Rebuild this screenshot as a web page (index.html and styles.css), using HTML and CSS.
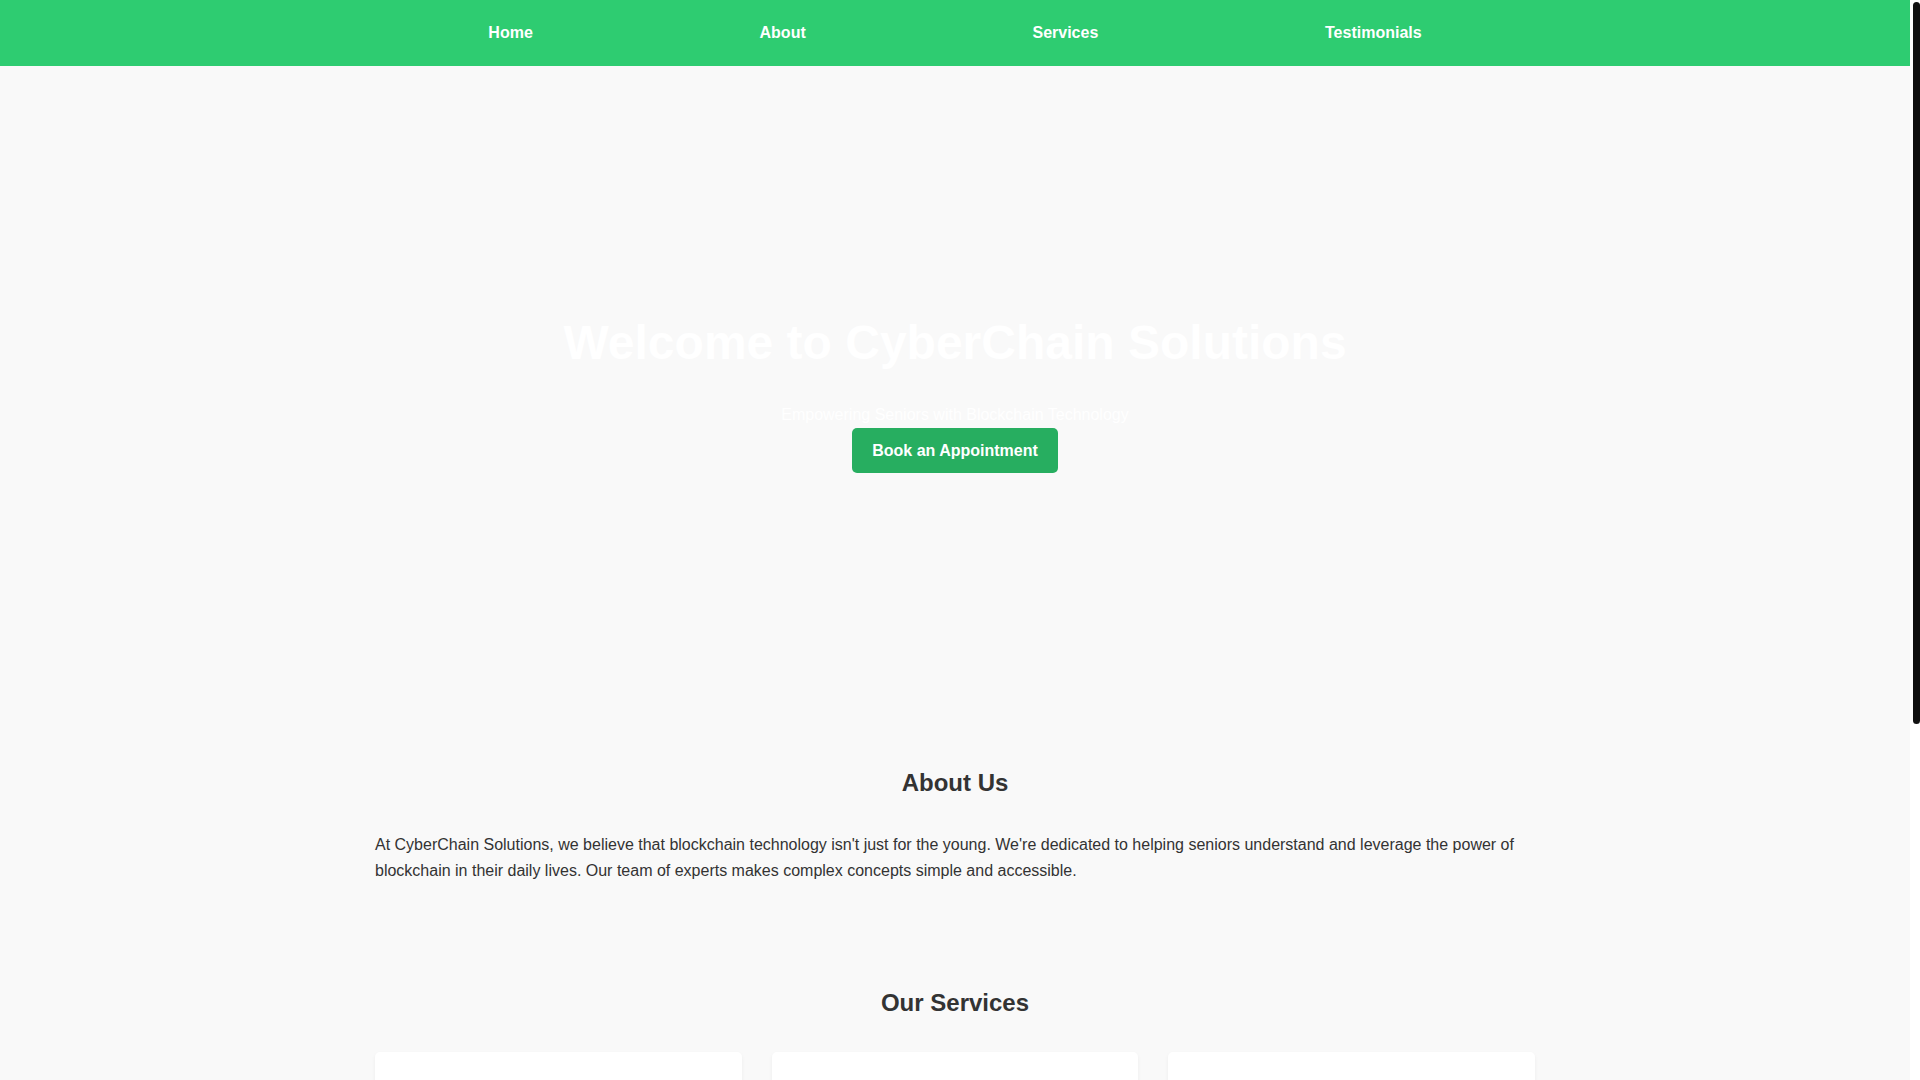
FILE: index.html
```html
<!DOCTYPE html>
<html lang="en">
<head>
<meta charset="UTF-8">
<title>CyberChain Solutions</title>
<link rel="stylesheet" href="styles.css">
</head>
<body>
<div class="page">
<nav class="nav">
  <ul class="nav-list">
    <li><a class="nav-link" href="#home">Home</a></li>
    <li><a class="nav-link" href="#about">About</a></li>
    <li><a class="nav-link" href="#services">Services</a></li>
    <li><a class="nav-link" href="#testimonials">Testimonials</a></li>
  </ul>
</nav>

<header class="hero" id="home">
  <div class="hero-content">
    <h1 class="hero-title">Welcome to CyberChain Solutions</h1>
    <p class="hero-sub">Empowering Seniors with Blockchain Technology</p>
    <a class="btn" href="#book">Book an Appointment</a>
  </div>
</header>

<section class="section" id="about">
  <h2 class="section-title">About Us</h2>
  <p class="text">At CyberChain Solutions, we believe that blockchain technology isn't just for the young. We're dedicated to helping seniors understand and leverage the power of blockchain in their daily lives. Our team of experts makes complex concepts simple and accessible.</p>
</section>

<section class="section" id="services">
  <h2 class="section-title">Our Services</h2>
  <div class="cards">
    <div class="card">
      <h3 class="card-title">Blockchain Basics</h3>
      <p class="text">Learn the fundamentals of blockchain technology in a friendly, easy-to-follow format.</p>
    </div>
    <div class="card">
      <h3 class="card-title">Digital Wallet Setup</h3>
      <p class="text">Get personal help setting up and securing your own digital wallet.</p>
    </div>
    <div class="card">
      <h3 class="card-title">Scam Protection</h3>
      <p class="text">Discover how to recognize and avoid common online and crypto scams.</p>
    </div>
  </div>
</section>

<section class="section" id="testimonials">
  <h2 class="section-title">Testimonials</h2>
  <div class="testimonial">
    <p class="text">"CyberChain Solutions made blockchain easy to understand. I feel confident managing my digital assets now!"</p>
    <p class="text author">- Margaret, 72</p>
  </div>
</section>

<footer class="footer">
  <p class="footer-text">&copy; 2024 CyberChain Solutions. All rights reserved.</p>
</footer>
</div>

<div class="scrollbar" aria-hidden="true">
  <div class="scrollbar-thumb"></div>
</div>
</body>
</html>
```

FILE: styles.css
```css
html {
  background: #f9f9f9;
}

body {
  margin: 0;
  padding-right: 10px;
  font-family: "Liberation Sans", Arial, sans-serif;
  font-size: 16px;
  line-height: 1.6;
  color: #333;
  background: #f9f9f9;
}

.scrollbar {
  position: fixed;
  top: 0;
  right: 0;
  width: 10px;
  height: 100vh;
  background: #ffffff;
}

.scrollbar-thumb {
  margin: 2px 0 0 3px;
  width: 7px;
  height: 722px;
  border-radius: 4px;
  background: #111111;
}

.nav {
  background: #2ecc71;
  padding: 20px 0;
}

.nav-list {
  list-style: none;
  margin: 0 auto;
  max-width: 1200px;
  box-sizing: border-box;
  padding: 0 20px;
  display: flex;
  justify-content: space-around;
  line-height: 26px;
}

.nav-link {
  color: #fff;
  text-decoration: none;
  font-weight: bold;
}

.hero {
  height: 60vh;
  box-sizing: border-box;
  padding-bottom: 1.5px;
  display: flex;
  align-items: center;
  justify-content: center;
  text-align: center;
  color: #fff;
}

.hero-title {
  font-size: 48px;
  margin: 0 0 20px;
}

.hero-sub {
  margin: 0;
}

.btn {
  display: inline-block;
  background: #27ae60;
  color: #fff;
  font-weight: bold;
  text-decoration: none;
  padding: 10px 20px;
  border-radius: 5px;
}

.section {
  max-width: 1200px;
  margin: 0 auto;
  box-sizing: border-box;
  padding: 50px 20px;
}

.section-title {
  font-size: 24px;
  text-align: center;
  margin: 0 0 30px;
  color: #333;
}

.text {
  margin: 0;
}

.cards {
  display: grid;
  grid-template-columns: repeat(3, 1fr);
  gap: 30px;
}

.card {
  background: #fff;
  border-radius: 5px;
  padding: 32px 20px 20px;
  box-shadow: 0 2px 4px rgba(0, 0, 0, 0.05);
}

.card-title {
  font-size: 20px;
  margin: 0 0 10px;
}

.testimonial {
  background: #fff;
  border-radius: 5px;
  padding: 20px;
}

.author {
  font-weight: bold;
  margin-top: 10px;
}

.footer {
  background: #2ecc71;
  color: #fff;
  text-align: center;
  padding: 20px;
}

.footer-text {
  margin: 0;
}
```
